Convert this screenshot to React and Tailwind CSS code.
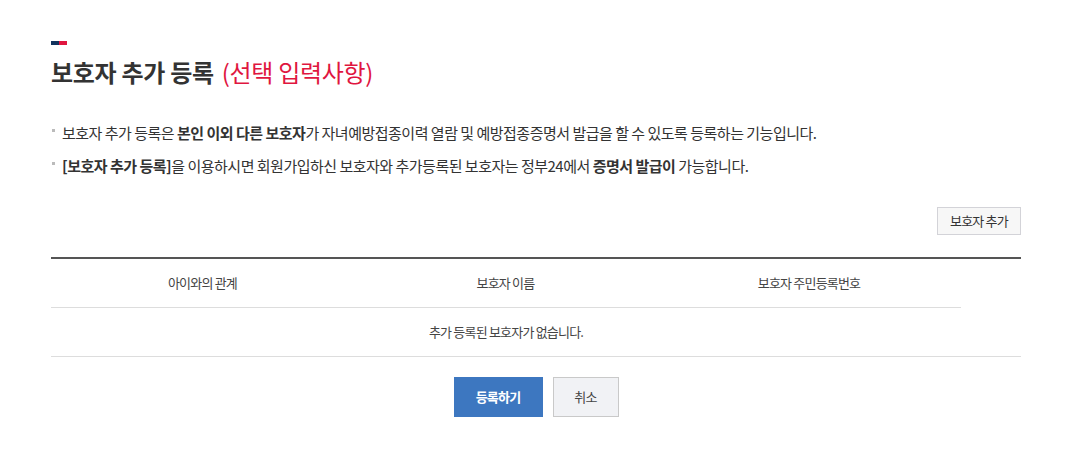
import React from "react";

const font = { fontFamily: '"Noto Sans CJK KR", "Noto Sans", sans-serif' };

export default function App() {
  return (
    <div className="w-[1076px] h-[453px] bg-white text-[#333]" style={font}>
      <div className="ml-[51px] w-[970px] pt-[41px]">
        <div className="flex h-[4px]">
          <div className="w-[8px] bg-[#12335e]" />
          <div className="w-[8px] bg-[#e0163f]" />
        </div>
        <h1 className="mt-[9px] flex items-center h-[36px] text-[24px] leading-none tracking-[-0.3px]">
          <span className="font-bold text-[#333]">보호자 추가 등록</span>
          <span className="ml-[8px] text-[#e0163f] font-normal">(선택 입력사항)</span>
        </h1>
        <ul className="mt-[32px] text-[15px] tracking-[-0.5px] text-[#333]">
          <li className="flex items-center h-[22px]">
            <span className="w-[3px] h-[3px] bg-[#bbb] mr-[7px] ml-[1px] -mt-[6px]" />
            <span>
              보호자 추가 등록은 <b className="font-bold">본인 이외 다른 보호자</b>가 자녀예방접종이력 열람 및
              예방접종증명서 발급을 할 수 있도록 등록하는 기능입니다.
            </span>
          </li>
          <li className="flex items-center h-[22px] mt-[11px]">
            <span className="w-[3px] h-[3px] bg-[#bbb] mr-[7px] ml-[1px] -mt-[6px]" />
            <span>
              <b className="font-bold">[보호자 추가 등록]</b>을 이용하시면 회원가입하신 보호자와 추가등록된 보호자는
              정부24에서 <b className="font-bold">증명서 발급이</b> 가능합니다.
            </span>
          </li>
        </ul>
        <div className="flex justify-end mt-[30px]">
          <button className="w-[84px] h-[28px] bg-[#f7f7f7] border border-[#d3d3d8] text-[13px] tracking-[-0.8px] text-[#333]">
            보호자 추가
          </button>
        </div>
        <div className="mt-[22px] border-t-2 border-[#555]">
          <div className="flex text-[13px] tracking-[-0.8px] text-[#444]">
            <div className="w-[303px] h-[49px] flex items-center justify-center border-b border-[#dddddd]">아이와의 관계</div>
            <div className="w-[303px] h-[49px] flex items-center justify-center border-b border-[#dddddd]">보호자 이름</div>
            <div className="w-[304px] h-[49px] flex items-center justify-center border-b border-[#dddddd]">보호자 주민등록번호</div>
            <div className="flex-1" />
          </div>
          <div className="flex h-[49px] border-b border-[#dddddd] text-[13px] tracking-[-0.8px] text-[#444]">
            <div className="w-[910px] flex items-center justify-center">추가 등록된 보호자가 없습니다.</div>
            <div className="flex-1" />
          </div>
        </div>
        <div className="flex justify-center gap-[10px] mt-[20px]">
          <button className="w-[89px] h-[40px] bg-[#3d77c0] text-white text-[13px] font-bold tracking-[-0.8px]">
            등록하기
          </button>
          <button className="w-[66px] h-[40px] bg-[#f1f2f5] border border-[#c9c9c9] text-[#444] text-[13px] tracking-[-0.8px]">
            취소
          </button>
        </div>
      </div>
    </div>
  );
}
